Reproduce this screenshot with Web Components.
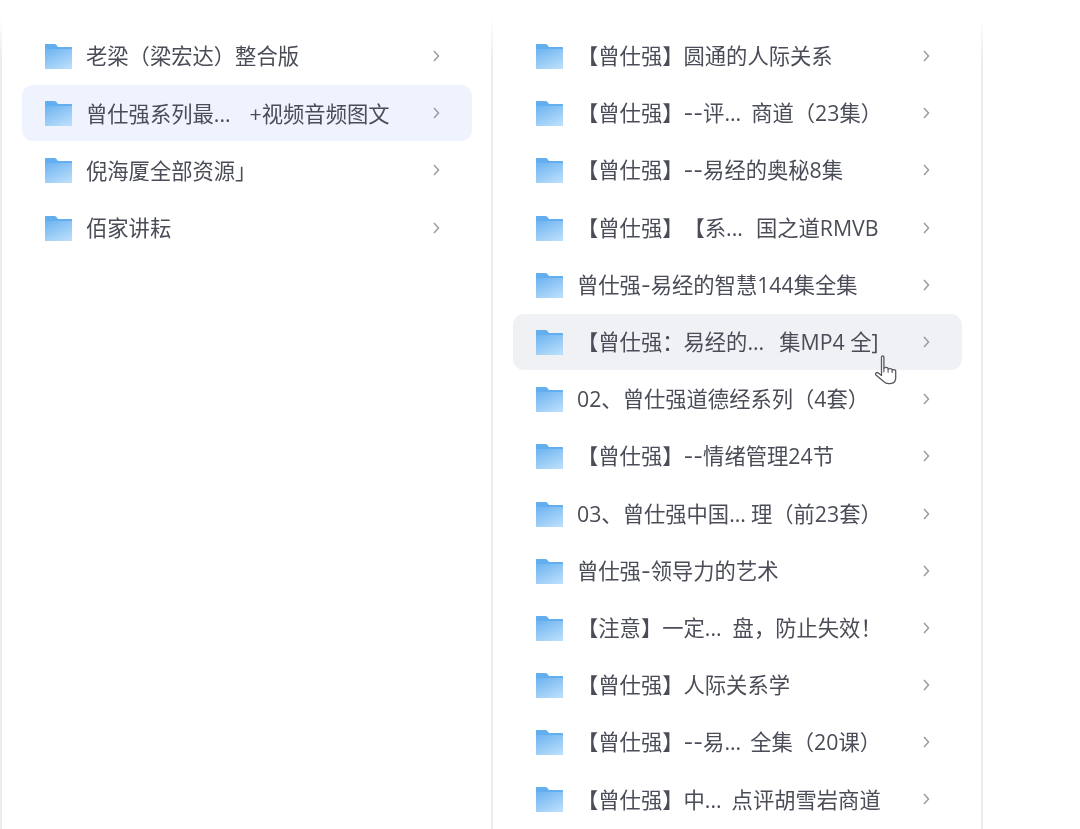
<!DOCTYPE html>
<html lang="zh">
<head>
<meta charset="utf-8">
<title>folders</title>
<style>
  html, body {
    margin: 0;
    height: 829px;
    overflow: hidden;
    background-color: #ffffff;
  }
</style>
</head>
<body>
<file-browser>
  <file-pane>
    <file-row>老梁（梁宏达）整合版</file-row>
    <file-row state="active">曾仕强系列最<file-dots gap="19">...</file-dots>+视频音频图文</file-row>
    <file-row>倪海厦全部资源」</file-row>
    <file-row>佰家讲耘</file-row>
  </file-pane>
  <file-pane>
    <file-row>【曾仕强】圆通的人际关系</file-row>
    <file-row>【曾仕强】<file-dash>--</file-dash>评<file-dots gap="10">...</file-dots>商道（23集）</file-row>
    <file-row>【曾仕强】<file-dash>--</file-dash>易经的奥秘8集</file-row>
    <file-row>【曾仕强】【系<file-dots gap="13">...</file-dots>国之道RMVB</file-row>
    <file-row>曾仕强<file-dash>-</file-dash>易经的智慧144集全集</file-row>
    <file-row state="hover">【曾仕强：易经的<file-dots gap="15">...</file-dots>集MP4 全]<hand-cursor></hand-cursor></file-row>
    <file-row>02、曾仕强道德经系列（4套）</file-row>
    <file-row>【曾仕强】<file-dash>--</file-dash>情绪管理24节</file-row>
    <file-row>03、曾仕强中国<file-dots gap="5">...</file-dots>理（前23套）</file-row>
    <file-row>曾仕强<file-dash>-</file-dash>领导力的艺术</file-row>
    <file-row>【注意】一定<file-dots gap="11">...</file-dots>盘，防止失效！</file-row>
    <file-row>【曾仕强】人际关系学</file-row>
    <file-row>【曾仕强】<file-dash>--</file-dash>易<file-dots gap="9">...</file-dots>全集（20课）</file-row>
    <file-row>【曾仕强】中<file-dots gap="10">...</file-dots>点评胡雪岩商道</file-row>
  </file-pane>
</file-browser>

<script>
const templateBrowser = document.createElement("template");
templateBrowser.innerHTML = `
  <style>
    :host {
      display: grid;
      grid-template-columns: 493px 490px;
      height: 829px;
      font-family: "Open Sans", "Noto Sans CJK SC", "Liberation Sans", sans-serif;
      text-spacing-trim: space-all;
      filter: blur(0.35px);
    }
  </style>
  <slot></slot>
`;

class FileBrowser extends HTMLElement {
  constructor() {
    super();
    this.attachShadow({ mode: "open" });
    this.shadowRoot.appendChild(templateBrowser.content.cloneNode(true));
  }
}

customElements.define("file-browser", FileBrowser);

const templatePane = document.createElement("template");
templatePane.innerHTML = `
  <style>
    :host {
      display: flex;
      flex-direction: column;
      gap: 1.2px;
      padding: 28px 19px 0 20px;
      box-sizing: border-box;
      border-right: 2px solid #ebecee;
      border-image: linear-gradient(to bottom, #ffffff 18px, #ebecee 60px) 1;
      min-width: 0;
    }

    :host(:first-child) {
      border-left: 2px solid #ebecee;
    }
  </style>
  <slot></slot>
`;

class FilePane extends HTMLElement {
  constructor() {
    super();
    this.attachShadow({ mode: "open" });
    this.shadowRoot.appendChild(templatePane.content.cloneNode(true));
  }
}

customElements.define("file-pane", FilePane);

const templateRow = document.createElement("template");
templateRow.innerHTML = `
  <style>
    :host {
      display: flex;
      align-items: center;
      flex: none;
      position: relative;
      height: 56px;
      padding: 0 32.5px 0 23px;
      border-radius: 11px;
      color: #4a4d57;
      font-size: 21.3px;
      line-height: 1;
      white-space: nowrap;
    }

    :host([state="active"]) {
      background-color: #eff3fe;
    }

    :host([state="hover"]) {
      background-color: #f0f1f4;
    }

    .folder {
      flex: none;
      width: 27px;
      height: 25px;
      margin: 1px 14px 0 0;
    }

    .name {
      flex: 1;
      min-width: 0;
    }

    .chevron {
      flex: none;
      width: 7px;
      height: 12px;
    }
  </style>

  <svg class="folder" viewBox="0 0 27 25" aria-hidden="true">
    <defs>
      <linearGradient id="body" x1="0.2" y1="0" x2="0.8" y2="1">
        <stop offset="0" stop-color="#72b6f1" />
        <stop offset="1" stop-color="#badefb" />
      </linearGradient>
    </defs>
    <path d="M1 0h8.5c.7 0 1.2.3 1.7.8L13 3h13c.6 0 1 .4 1 1v20c0 .6-.4 1-1 1H1c-.6 0-1-.4-1-1V1c0-.6.4-1 1-1z" fill="#62aeef" />
    <path d="M1 5h25c.6 0 1 .4 1 1v18c0 .6-.4 1-1 1H1c-.6 0-1-.4-1-1V6c0-.6.4-1 1-1z" fill="url(#body)" />
  </svg>
  <span class="name"><slot></slot></span>
  <svg class="chevron" viewBox="0 0 7 12" aria-hidden="true">
    <path d="M1 1l4.5 5L1 11" fill="none" stroke="#9a9ca3" stroke-width="1.5" />
  </svg>
`;

class FileRow extends HTMLElement {
  constructor() {
    super();
    this.attachShadow({ mode: "open" });
    this.shadowRoot.appendChild(templateRow.content.cloneNode(true));
  }
}

customElements.define("file-row", FileRow);

// truncated-name marker: the original UI leaves a gap of varying width after it
class FileDots extends HTMLElement {
  constructor() {
    super();
    this.attachShadow({ mode: "open" });
    this.shadowRoot.innerHTML = `<style>:host { display: inline; }</style><slot></slot>`;
  }

  connectedCallback() {
    this.style.marginRight = `${this.getAttribute("gap") ?? 0}px`;
  }
}

customElements.define("file-dots", FileDots);

class FileDash extends HTMLElement {
  constructor() {
    super();
    this.attachShadow({ mode: "open" });
    this.shadowRoot.innerHTML = `<style>:host { display: inline; font-family: Inter, sans-serif; }</style><slot></slot>`;
  }
}

customElements.define("file-dash", FileDash);

const templateCursor = document.createElement("template");
templateCursor.innerHTML = `
  <style>
    :host {
      position: absolute;
      left: 360px;
      top: 40px;
      width: 25px;
      height: 32px;
      display: block;
    }

    svg {
      display: block;
      width: 100%;
      height: 100%;
    }
  </style>

  <svg viewBox="0 0 24 32" aria-hidden="true">
    <path d="M8 3c0-1.4 2.4-1.4 2.4 0v11.5c0-1.5 4.2-1.5 4.2 0v1c0-1.3 4-1.3 4 0v1c0-1.2 3.6-1.2 3.6.2v7.3c0 2.6-1.8 5-4.4 5.4-3 .5-6 0-7.6-1.8L2.4 21c-1.2-1.6.8-3.2 2.4-2l3.2 2.4z" fill="#ffffff" stroke="#55585f" stroke-width="1.3" stroke-linejoin="round" />
    <path d="M10.4 14.5v4M14.6 15.5v3.2M18.6 16.5v2.4" fill="none" stroke="#55585f" stroke-width="1.1" />
  </svg>
`;

class HandCursor extends HTMLElement {
  constructor() {
    super();
    this.attachShadow({ mode: "open" });
    this.shadowRoot.appendChild(templateCursor.content.cloneNode(true));
  }
}

customElements.define("hand-cursor", HandCursor);
</script>
</body>
</html>
